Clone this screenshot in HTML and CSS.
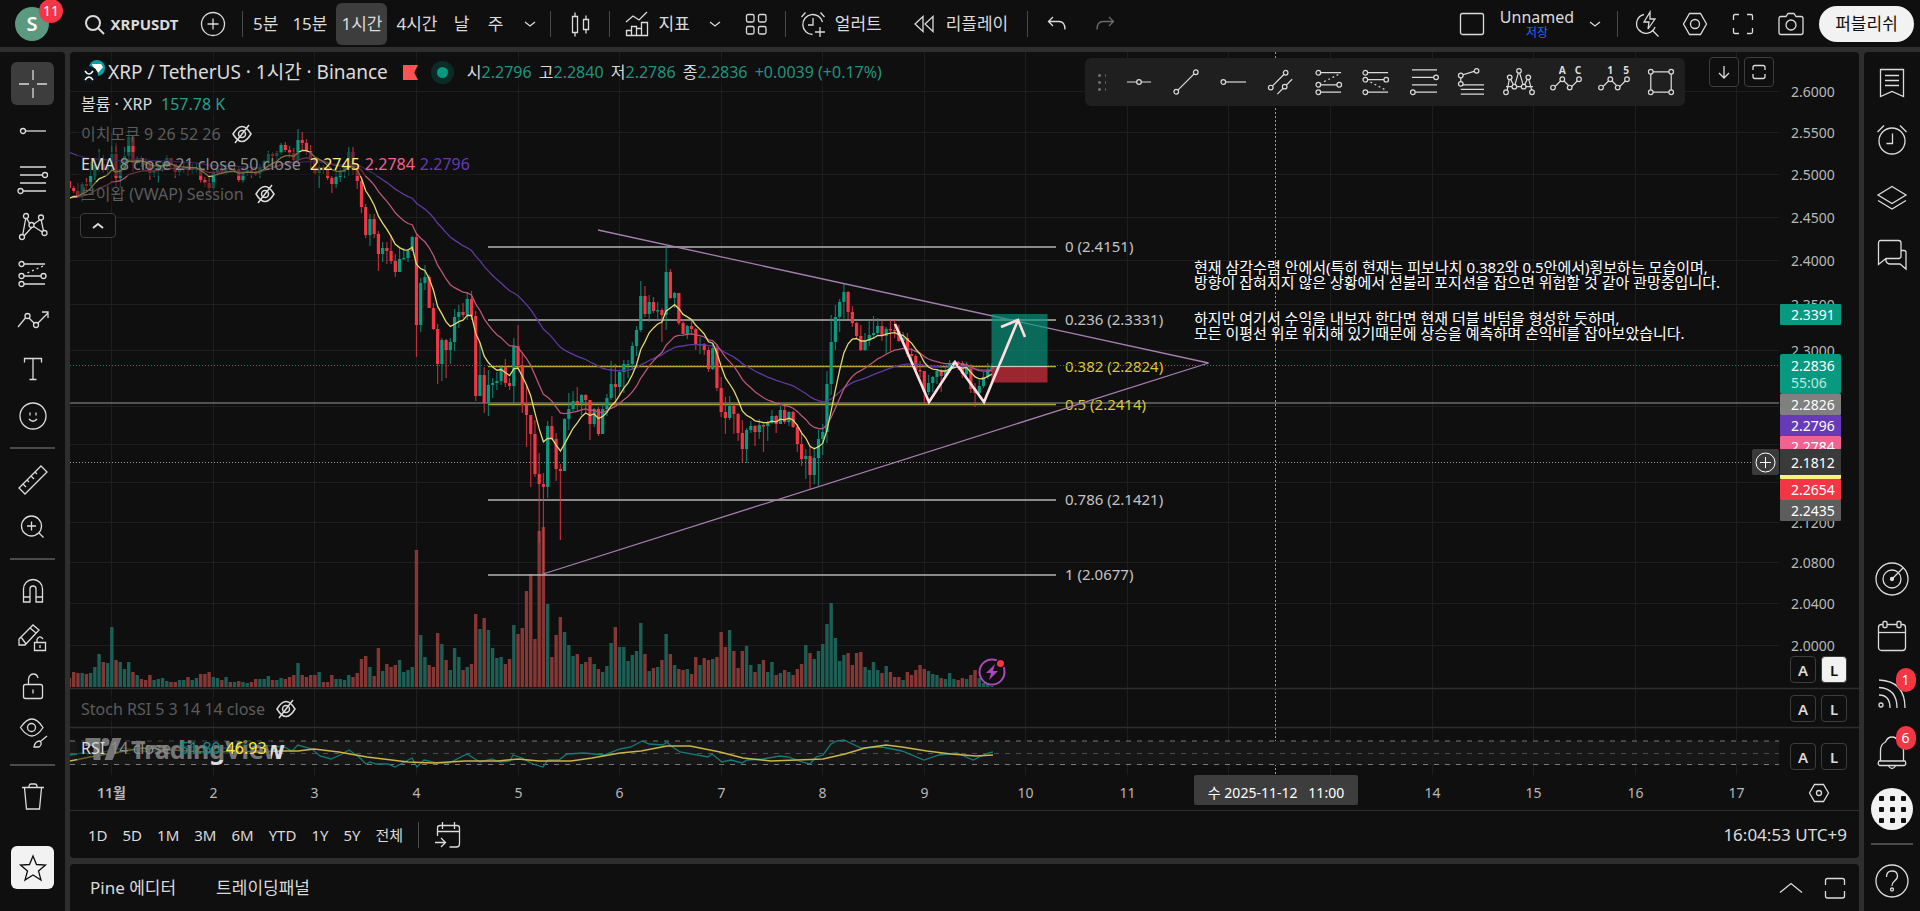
FILE: index.html
```html
<!DOCTYPE html>
<html lang="ko">
<head>
  <meta charset="UTF-8" />
  <meta name="viewport" content="width=device-width, initial-scale=1" />
  <title>XRPUSDT 2.2836</title>
  <link rel="stylesheet" href="styles.css">
</head>
<body>

<header class="topbar">
  <button class="avatar" aria-label="Account">S<span class="badge">11</span></button>
  <button class="tb symbol"><svg class="ic bold" viewBox="0 0 28 28"><circle cx="13" cy="13" r="7"/><path d="M18 18l6 6"/></svg>XRPUSDT</button>
  <button class="tb icon" aria-label="Compare"><svg class="ic" viewBox="0 0 28 28"><circle cx="14" cy="14" r="11.500"/><path d="M14 8.500v11M8.500 14h11"/></svg></button>
  <span class="sep"></span>
  <nav class="intervals">
    <button class="tb">5분</button>
    <button class="tb">15분</button>
    <button class="tb active">1시간</button>
    <button class="tb">4시간</button>
    <button class="tb">날</button>
    <button class="tb">주</button>
    <button class="tb" aria-label="More"><svg class="ic chev" viewBox="0 0 12 12"><path d="M1 4l5 4 5-4"/></svg></button>
  </nav>
  <span class="sep"></span>
  <button class="tb icon" aria-label="Candles"><svg class="ic" viewBox="0 0 28 28"><path d="M6.500 6.500h5v16h-5zM9 2.500v4M9 22.500v4M17.500 9.500h5v10h-5zM20 5.500v4M20 19.500v4"/></svg></button>
  <span class="sep"></span>
  <button class="tb study"><svg class="ic" viewBox="0 0 28 28"><path d="M3.500 20.500h5v5h-5zM8.500 16.500h5v9h-5zM13.500 18.500h5v7h-5zM18.500 12.500h6v13h-6zM3 12l7-6 6 4 8-8"/></svg>지표</button>
  <button class="tb narrow" aria-label="Favorites"><svg class="ic chev" viewBox="0 0 12 12"><path d="M1 4l5 4 5-4"/></svg></button>
  <button class="tb icon" aria-label="Templates"><svg class="ic" viewBox="0 0 28 28"><rect x="4.500" y="4.500" width="7.500" height="7.500" rx="1.500"/><rect x="16.500" y="4.500" width="7.500" height="7.500" rx="1.500"/><rect x="4.500" y="16.500" width="7.500" height="7.500" rx="1.500"/><rect x="16.500" y="16.500" width="7.500" height="7.500" rx="1.500"/></svg></button>
  <span class="sep"></span>
  <button class="tb study"><svg class="ic" viewBox="0 0 28 28"><path d="M23.500 12a10 10 0 1 0-10 12.500M14 8v7h-5M2.500 7l4-4.500M21.500 2.500l4 4.500M21 17v10M16 22h10"/></svg>얼러트</button>
  <button class="tb study wide"><svg class="ic" viewBox="0 0 28 28"><path d="M13 6.500v15L5 14zM23 6.500v15L15 14z"/></svg>리플레이</button>
  <span class="sep"></span>
  <button class="tb icon" aria-label="Undo"><svg class="ic" viewBox="0 0 28 28"><path d="M10 7l-4.500 4.500L10 16M6 11.500h10q6 0 6 8"/></svg></button>
  <button class="tb icon dim" aria-label="Redo"><svg class="ic" viewBox="0 0 28 28"><path d="M18 7l4.500 4.500L18 16M22 11.500H12q-6 0-6 8"/></svg></button>

  <div class="topright">
    <button class="tb icon" aria-label="Layout"><svg class="ic" viewBox="0 0 28 28"><rect x="2.500" y="3.500" width="23" height="21" rx="2"/></svg></button>
    <button class="tb layout"><span>Unnamed</span><small>저장</small></button>
    <button class="tb narrow" aria-label="Layouts"><svg class="ic chev" viewBox="0 0 12 12"><path d="M1 4l5 4 5-4"/></svg></button>
    <span class="sep"></span>
    <button class="tb icon" aria-label="Quick search"><svg class="ic" viewBox="0 0 28 28"><path d="M11 4.500A9.500 9.500 0 1 0 22 17M19 20l6.500 6.500M17 2l-6 10h5l-1 7 7-10h-5z"/></svg></button>
    <button class="tb icon" aria-label="Settings"><svg class="ic" viewBox="0 0 28 28"><path d="M8.500 3.500h11l6 10.500-6 10.500h-11L2.500 14z"/><circle cx="14" cy="14" r="4.500"/></svg></button>
    <button class="tb icon" aria-label="Fullscreen"><svg class="ic" viewBox="0 0 28 28"><path d="M4.500 10V6q0-1.500 1.500-1.500h4M18 4.500h4q1.500 0 1.500 1.500v4M23.500 18v4q0 1.500-1.500 1.500h-4M10 23.500H6q-1.500 0-1.500-1.500v-4"/></svg></button>
    <button class="tb icon" aria-label="Snapshot"><svg class="ic" viewBox="0 0 28 28"><path d="M4 6.500h5l2-3h6l2 3h5q2 0 2 2v14q0 2-2 2H4q-2 0-2-2v-14q0-2 2-2z"/><circle cx="14" cy="15" r="5"/></svg></button>
    <button class="publish">퍼블리쉬</button>
  </div>
</header>

<aside class="leftbar">
  <div class="tools eight">
    <button class="tool on" aria-label="Cross"><svg class="ic" viewBox="0 0 28 28"><path d="M14 0v10M14 18v10M0 14h10M18 14h10"/></svg></button>
    <button class="tool" aria-label="Line"><svg class="ic" viewBox="0 0 28 28"><circle cx="4" cy="14" r="2.500"/><path d="M6.500 14H27"/></svg></button>
    <button class="tool" aria-label="Fib"><svg class="ic" viewBox="0 0 28 28"><path d="M1 2h26M1 10h23M1 18h26M4 26h23"/><circle cx="26" cy="10" r="2.500"/><circle cx="1.500" cy="26" r="2.500"/></svg></button>
    <button class="tool" aria-label="Pattern"><svg class="ic" viewBox="0 0 28 28"><path d="M3.500 24L7 5l5 9 10-7 3 14-11-7-9 10"/><circle class="fill" cx="3" cy="25" r="2.500"/><circle class="fill" cx="7" cy="4" r="2.500"/><circle class="fill" cx="12.500" cy="13" r="2.500"/><circle class="fill" cx="22" cy="5.500" r="2.500"/><circle class="fill" cx="25.500" cy="21" r="2.500"/></svg></button>
    <button class="tool" aria-label="Projection"><svg class="ic" viewBox="0 0 28 28"><path d="M4.500 4H26M4.500 16H22M4.500 24H26"/><path class="dots" d="M24 6L6 14"/><circle class="fill" cx="2.500" cy="4" r="2.500"/><circle class="fill" cx="2.500" cy="16" r="2.500"/><circle class="fill" cx="24.500" cy="16" r="2.500"/><circle class="fill" cx="2.500" cy="24" r="2.500"/></svg></button>
    <button class="tool" aria-label="Brush"><svg class="ic" viewBox="0 0 28 28"><path d="M-1 20L8 9l9 9L29 6M23 5h6v6"/><circle class="fill" cx="8.500" cy="9" r="2.500"/><circle class="fill" cx="17" cy="18" r="2.500"/></svg></button>
    <button class="tool" aria-label="Text"><svg class="ic" viewBox="0 0 28 28"><path d="M5.500 7.500v-4h17v4M14 3.500v21M10.500 24.500h7"/></svg></button>
    <button class="tool" aria-label="Emoji"><svg class="ic" viewBox="0 0 28 28"><circle cx="14" cy="14" r="13"/><path d="M10 17q4 4.500 8 0M11 10.500v3M17 10.500v3"/></svg></button>
  </div>
  <hr>
  <div class="tools two">
    <button class="tool" aria-label="Measure"><svg class="ic" viewBox="0 0 28 28"><path d="M22 0l6 6L6 28l-6-6zM4 18l3 3M8 14l2 2M12 10l3 3M16 6l2 2"/></svg></button>
    <button class="tool" aria-label="Zoom"><svg class="ic" viewBox="0 0 28 28"><circle cx="12.500" cy="13" r="10"/><path d="M12.500 8.500v9M8 13h9M20 20l4.500 4.500"/></svg></button>
  </div>
  <hr>
  <div class="tools four">
    <button class="tool" aria-label="Magnet"><svg class="ic" viewBox="0 0 28 28"><path d="M4.500 25V12a9.500 9.500 0 0 1 19 0v13H17V12a3 3 0 0 0-6 0v13zM4.500 20H11M17 20h6.500"/></svg></button>
    <button class="tool" aria-label="Lock drawing"><svg class="ic" viewBox="0 0 28 28"><path d="M0 21v-6L14 1l6 5L6 21zM2 13l5 7M11 4l6 5M15.500 18.500h11v8h-11zM18 18.500v-3q2.500-5 6-.5M21 21v3"/></svg></button>
    <button class="tool" aria-label="Lock all"><svg class="ic" viewBox="0 0 28 28"><rect x="4.500" y="12.500" width="19" height="14" rx="2"/><path d="M9.500 12V7q1-5 5-5 3.500 0 4.500 4M14 17.500v4"/></svg></button>
    <button class="tool" aria-label="Hide"><svg class="ic" viewBox="0 0 28 28"><path d="M1.500 8.500q11.500-17 22.500 0-11 17-22.500 0z"/><circle cx="12.500" cy="8.500" r="4"/><path d="M15 28q1-6 6-6 3 3-1 6zM22 22l6-5"/></svg></button>
  </div>
  <hr>
  <div class="tools one">
    <button class="tool" aria-label="Remove"><svg class="ic" viewBox="0 0 28 28"><path d="M3 4.500h22M5.500 5l2 21h13l2-21M10 4q0-3 2-3h4q2 0 2 3"/></svg></button>
  </div>
  <button class="tool star" aria-label="Favorites toolbar"><svg class="ic" viewBox="0 0 28 28"><path d="M14 2l3.500 8.500 9 .5-7 6 2.500 9-8-5-8 5 2.500-9-7-6 9-.5z"/></svg></button>
</aside>

<main class="center">
  <section class="panel chartpanel">
    <div class="chart">
      <svg id="chart" class="plot" viewBox="70 52 1789 758"></svg>

      <div class="legend">
        <div class="row title">
          <svg class="coin" viewBox="0 0 24 24"><circle cx="16" cy="8" r="8" fill="#00a3a3"/><path d="M11 4h9l2 3-5 6-5-6z" fill="#fff"/><circle cx="8" cy="15" r="9" fill="#0f1418"/><path d="M4 11q4 6 8 0M4 20q4-6 8 0" fill="none" stroke="#fff" stroke-width="1.500"/></svg>
          <h1>XRP / TetherUS · 1시간 · Binance</h1>
          <svg class="flag" viewBox="0 0 16 16"><path d="M0 0h16l-4 8 4 8H0z" fill="#ff5252"/></svg>
          <span class="live"></span>
          <p class="ohlc">시<b>2.2796</b> 고<b>2.2840</b> 저<b>2.2786</b> 종<b>2.2836</b> <b class="chg">+0.0039 (+0.17%)</b></p>
        </div>
        <div class="row">볼륨 · XRP <span class="vol">157.78 K</span></div>
        <div class="row off">이치모쿠 9 26 52 26 <svg class="eye" viewBox="0 0 20 20"><path d="M1 10q9-15 18 0-9 15-18 0zM3 19L17 1"/><circle cx="10" cy="10" r="3.500"/></svg></div>
        <div class="row">EMA <span class="args">8 close 21 close 50 close</span> <span class="e8">2.2745</span> <span class="e21">2.2784</span> <span class="e50">2.2796</span></div>
        <div class="row off">브이왑 (VWAP) Session <svg class="eye" viewBox="0 0 20 20"><path d="M1 10q9-15 18 0-9 15-18 0zM3 19L17 1"/><circle cx="10" cy="10" r="3.500"/></svg></div>
        <button class="collapse" aria-label="Collapse"><svg class="ic chev bold" viewBox="0 0 12 12"><path d="M1 8l5-4 5 4"/></svg></button>
      </div>
      <div class="row off sub stoch">Stoch RSI 5 3 14 14 close <svg class="eye" viewBox="0 0 20 20"><path d="M1 10q9-15 18 0-9 15-18 0zM3 19L17 1"/><circle cx="10" cy="10" r="3.500"/></svg></div>
      <div class="logo"><svg viewBox="0 0 36 22"><path d="M0 0h15v22H8V8H0z"/><circle cx="20" cy="4" r="4"/><path d="M27 0h9l-9 22h-8z"/></svg>TradingView</div>
      <div class="row sub rsi">RSI <span class="args">14 close</span> <span class="r1">51.80</span> <span class="r2">46.93</span></div>

      <div class="drawbar">
        <span class="grip"></span>
        <button class="draw" aria-label="Horizontal line"><svg class="ic" viewBox="0 0 28 28"><path d="M1 14h10.500M16.500 14H27"/><circle cx="14" cy="14" r="2.500"/></svg></button>
        <button class="draw" aria-label="Trend line"><svg class="ic" viewBox="0 0 28 28"><path d="M5 23L23 5"/><circle class="fill" cx="3.500" cy="24.500" r="2.500"/><circle class="fill" cx="24.500" cy="3.500" r="2.500"/></svg></button>
        <button class="draw" aria-label="Horizontal ray"><svg class="ic" viewBox="0 0 28 28"><path d="M5 14h22"/><circle cx="2.500" cy="14" r="2.500"/></svg></button>
        <button class="draw" aria-label="Parallel channel"><svg class="ic" viewBox="0 0 28 28"><path d="M3 20L19 4M10 27l16-16"/><circle class="fill" cx="3" cy="20" r="2.500"/><circle class="fill" cx="19" cy="4" r="2.500"/><circle class="fill" cx="18" cy="19" r="2.500"/></svg></button>
        <button class="draw" aria-label="Long position"><svg class="ic" viewBox="0 0 28 28"><path d="M4 4h23M4 17h20M4 25h23"/><path class="dots" d="M24 6L6 15"/><circle class="fill" cx="2.500" cy="4" r="2.500"/><circle class="fill" cx="2.500" cy="17" r="2.500"/><circle class="fill" cx="25" cy="17" r="2.500"/><circle class="fill" cx="2.500" cy="25" r="2.500"/></svg></button>
        <button class="draw" aria-label="Short position"><svg class="ic" viewBox="0 0 28 28"><path d="M4 4h23M4 11.500h20M4 25h23"/><path class="dots" d="M8 14l17 9"/><circle class="fill" cx="2.500" cy="4" r="2.500"/><circle class="fill" cx="2.500" cy="11.500" r="2.500"/><circle class="fill" cx="25" cy="11.500" r="2.500"/><circle class="fill" cx="2.500" cy="25" r="2.500"/></svg></button>
        <button class="draw" aria-label="Fib retracement"><svg class="ic" viewBox="0 0 28 28"><path d="M1 1h27M1 9h26M1 17h27M3 25h25"/><circle class="fill" cx="27" cy="9" r="2.500"/><circle class="fill" cx="2" cy="25" r="2.500"/></svg></button>
        <button class="draw" aria-label="Fib extension"><svg class="ic" viewBox="0 0 28 28"><path d="M3 15V7l16-5M3 17h25M3 22h25M3 27h25"/><circle class="fill" cx="3" cy="7" r="2.500"/><circle class="fill" cx="20" cy="2" r="2.500"/><circle class="fill" cx="3" cy="16" r="2.500"/></svg></button>
        <button class="draw" aria-label="Head and shoulders"><svg class="ic" viewBox="0 0 28 28"><path d="M0 19h29M1 24L4 9l5 10 5-17 5 17 5-10 4 15"/><circle class="fill" cx="0" cy="25" r="2.500"/><circle class="fill" cx="4" cy="9" r="2.500"/><circle class="fill" cx="9" cy="19" r="2.500"/><circle class="fill" cx="14" cy="2" r="2.500"/><circle class="fill" cx="19" cy="19" r="2.500"/><circle class="fill" cx="24" cy="9" r="2.500"/><circle class="fill" cx="28" cy="25" r="2.500"/></svg></button>
        <button class="draw" aria-label="ABC wave"><svg class="ic" viewBox="0 0 28 28"><path d="M1 20l9-9 9 9 9-9"/><circle class="fill" cx="0" cy="20" r="2.500"/><circle class="fill" cx="10" cy="11" r="2.500"/><circle class="fill" cx="18" cy="20" r="2.500"/><circle class="fill" cx="28" cy="11" r="2.500"/><text x="10" y="5">A</text><text x="27" y="5">C</text></svg></button>
        <button class="draw" aria-label="12345 wave"><svg class="ic" viewBox="0 0 28 28"><path d="M1 20l9-9 9 9 9-9"/><circle class="fill" cx="0" cy="20" r="2.500"/><circle class="fill" cx="10" cy="11" r="2.500"/><circle class="fill" cx="18" cy="20" r="2.500"/><circle class="fill" cx="28" cy="11" r="2.500"/><text x="10" y="5">1</text><text x="27" y="5">5</text></svg></button>
        <button class="draw" aria-label="Rectangle"><svg class="ic" viewBox="0 0 28 28"><path d="M3 3h22v22H3z"/><circle class="fill" cx="3" cy="3" r="2.500"/><circle class="fill" cx="25" cy="3" r="2.500"/><circle class="fill" cx="3" cy="25" r="2.500"/><circle class="fill" cx="25" cy="25" r="2.500"/></svg></button>
      </div>
      <div class="panebtns">
        <button class="box" aria-label="Move down"><svg class="ic small" viewBox="0 0 16 16"><path d="M8 2v12M3 9l5 5 5-5"/></svg></button>
        <button class="box" aria-label="Maximize"><svg class="ic small" viewBox="0 0 16 16"><path d="M2 6V3.500Q2 1.500 4 1.500h8q2 0 2 2V6M2 10v2.500q0 2 2 2h8q2 0 2-2V10"/></svg></button>
      </div>
      <div class="scale s1"><button class="al">A</button><button class="al on">L</button></div>
      <div class="scale s2"><button class="al">A</button><button class="al">L</button></div>
      <div class="scale s3"><button class="al">A</button><button class="al">L</button></div>
    </div>
    <div class="ranges">
      <button>1D</button><button>5D</button><button>1M</button><button>3M</button><button>6M</button><button>YTD</button><button>1Y</button><button>5Y</button><button>전체</button>
      <span class="sep"></span>
      <button aria-label="Go to"><svg class="ic" viewBox="0 0 28 28"><path d="M3.500 15V7q0-2.500 2.500-2.500h17q2.500 0 2.500 2.500v16q0 3-3 3h-7M3.500 10.500h22M8.500 1v7M20.500 1v7M1 21.500h10M7 17l4.500 4.500L7 26"/></svg></button>
      <span class="clock">16:04:53 UTC+9</span>
    </div>
  </section>

  <section class="panel bottom">
    <button>Pine 에디터</button>
    <button>트레이딩패널</button>
    <span class="grow"></span>
    <button aria-label="Open panel"><svg class="ic" viewBox="0 0 28 28"><path d="M3 18.500l11-9 11 9"/></svg></button>
    <button aria-label="Maximize panel"><svg class="ic" viewBox="0 0 28 28"><path d="M4.500 11V6.500q0-2 2-2h15q2 0 2 2V11M4.500 17v5q0 2 2 2h15q2 0 2-2v-5"/></svg></button>
  </section>
</main>

<aside class="rightbar">
  <div class="widgets w4">
    <button class="tool" aria-label="Watchlist"><svg class="ic big" viewBox="0 0 32 32"><path d="M4.500 2.500h23v27L16 24.500l-11.500 5zM9 8.500h14M9 13.500h14M9 18.500h14"/></svg></button>
    <button class="tool" aria-label="Alerts"><svg class="ic big" viewBox="0 0 32 32"><circle cx="16" cy="17" r="13"/><path d="M16.500 9.500v10h-6M1.500 8L8 1.500M24 1.500L30.500 8"/></svg></button>
    <button class="tool" aria-label="Object tree"><svg class="ic big" viewBox="0 0 32 32"><path d="M16 4.500l14 8.500-14 8.500L2 13zM2 18.500L16 27l14-8.500"/></svg></button>
    <button class="tool" aria-label="Chats"><svg class="ic big" viewBox="0 0 32 32"><path d="M4.500 1.500h18q2.500 0 2.500 2.500v13q0 2.500-2.500 2.500H10l-7.500 6v-21q0-3 2-3zM25 11.500h3q2 0 2 2v16.500l-6-5H14q-3 0-4-3v-2"/></svg></button>
  </div>
  <div class="widgets w5">
    <button class="tool" aria-label="Screener"><svg class="ic big" viewBox="0 0 32 32"><circle cx="16" cy="16" r="16"/><circle cx="16" cy="16" r="9"/><circle cx="16" cy="16" r="1.500" fill="#dbdbdb"/><path d="M16 16L27 5"/></svg></button>
    <button class="tool" aria-label="Calendar"><svg class="ic big" viewBox="0 0 32 32"><rect x="2.500" y="4.500" width="27" height="26" rx="3"/><path d="M2.500 12.500h27"/><rect class="fill" x="7" y="1.500" width="4" height="6" rx="1"/><rect class="fill" x="21" y="1.500" width="4" height="6" rx="1"/></svg></button>
    <button class="tool" aria-label="Ideas"><svg class="ic big" viewBox="0 0 32 32"><circle cx="5" cy="27" r="2"/><path d="M3 17q11 0 11 13M3 9.500q18 1 18 20.500M3 2q26 1 26 28"/></svg><span class="badge">1</span></button>
    <button class="tool" aria-label="Notifications"><svg class="ic big" viewBox="0 0 32 32"><path d="M4.500 25V15q0-7 5-9 2-5 6.500-5t6.500 5q5 2 5 9v10zM3 25h26q2 4-1 4.500H4q-3-.5-1-4.500zM12.500 30q3.500 5 7 0"/></svg><span class="badge">6</span></button>
    <button class="apps" aria-label="Products"><i></i><i></i><i></i><i></i><i></i><i></i><i></i><i></i><i></i></button>
  </div>
  <hr>
  <button class="tool" aria-label="Help"><svg class="ic big" viewBox="0 0 32 32"><circle cx="16" cy="16" r="16"/><path d="M10.500 12q0-6 5.500-6t5.500 5q0 3-3 5-2.500 2-2.500 5"/><circle cx="16" cy="24.500" r="1.500"/></svg></button>
</aside>

<script src="chart.js"></script>
</body>
</html>
```

FILE: styles.css
```css
* { box-sizing: border-box; }
body {
  margin: 0;
  min-height: 100vh;
  display: grid;
  grid-template: 47px 1fr / 65px 1fr 56px;
  gap: 5px;
  background: #2e2e2e;
  color: #dbdbdb;
  font-family: "Noto Sans", "Noto Sans CJK KR", sans-serif;
  font-size: 17px;
  line-height: 20px;
  overflow-x: hidden;
}
button { background: none; border: 0; padding: 0; margin: 0; color: inherit; font: inherit; cursor: pointer; white-space: nowrap; }
hr { width: 45px; height: 2px; margin: 7px 0; border: 0; background: #4a4a4a; }
h1, p { margin: 0; font-weight: 400; }

/* icons */
.ic { width: 28px; height: 28px; flex: none; fill: none; stroke: #dbdbdb; stroke-width: 1.3; overflow: visible; }
.ic.chev { width: 12px; height: 12px; }
.ic.small { width: 16px; height: 16px; }
.ic.big { width: 32px; height: 32px; }
.ic.bold { stroke-width: 2; }
.ic .dots { stroke-dasharray: 2 3; }
.ic .fill { fill: #0f0f0f; }
.ic text { fill: #dbdbdb; stroke: none; font-size: 11px; font-weight: 700; text-anchor: middle; }
.badge {
  position: absolute; top: 0; right: 0;
  min-width: 20px; height: 24px; padding: 0 4px;
  border-radius: 12px; background: #f23645; color: #fff;
  font-size: 14px; font-weight: 400; line-height: 24px; text-align: center;
}

/* top bar */
.topbar { grid-column: 1 / -1; display: flex; align-items: center; background: #0f0f0f; padding-right: 6px; }
.avatar { position: relative; width: 34px; height: 34px; margin-left: 15px; border-radius: 50%; background: #5b9a80; color: #fff; font-size: 20px; font-weight: 600; }
.avatar .badge { top: -8px; right: -14px; min-width: 24px; }
.tb { display: flex; align-items: center; justify-content: center; gap: 8px; height: 42px; border-radius: 6px; }
.tb.icon { width: 38px; margin: 0 5px; }
.tb.narrow { width: 30px; margin: 0 2px; }
.tb.study { padding: 0 8px; }
.tb.wide { margin-left: 12px; padding-right: 14px; }
.tb.active { background: #3d3d3d; }
.tb.dim { opacity: .45; }
.tb.symbol { margin: 0 4px 0 24px; width: 112px; gap: 3px; font-size: 15px; font-weight: 700; }
.sep { width: 1px; height: 26px; background: #4a4a4a; margin: 0 5px; }
.intervals { display: flex; gap: 4px; }
.intervals .tb { min-width: 30px; padding: 0 5px; }
.topright { margin-left: auto; display: flex; align-items: center; }
.tb.layout { flex-direction: column; gap: 0; width: 82px; font-size: 16px; line-height: 18px; }
.layout small { color: #2962ff; font-size: 12px; line-height: 14px; }
.publish { width: 95px; height: 36px; margin-left: 4px; border-radius: 18px; background: #f2f2f2; color: #0f0f0f; }

/* side bars */
.leftbar, .rightbar { display: flex; flex-direction: column; align-items: center; background: #0f0f0f; }
.leftbar { padding-top: 8px; border-radius: 0 4px 0 0; }
.rightbar { padding: 2px 0 9px; border-radius: 4px 0 0 0; }
.tools, .widgets { display: grid; grid-auto-rows: 1fr; align-items: center; justify-items: center; }
.eight { height: 380px; }
.four { height: 190px; }
.two { height: 95px; }
.one { height: 48px; }
.w4 { height: 230px; }
.w5 { height: 288px; margin-top: auto; }
.tool { position: relative; display: flex; align-items: center; justify-content: center; width: 43px; height: 43px; border-radius: 6px; }
.tool.on { background: #3d3d3d; }
.star { margin-top: 25px; background: #f2f2f2; }
.star .ic { stroke: #0f0f0f; }
.rightbar .badge { top: -4px; right: -2px; }
.rightbar hr { width: 42px; margin: 5px 0 14px; }
.apps { display: grid; grid-template-columns: repeat(3, 5px); gap: 6px; place-content: center; width: 42px; height: 42px; border-radius: 50%; background: #f2f2f2; }
.apps i { height: 5px; border-radius: 1px; background: #0f0f0f; }

/* panels */
.center { display: flex; flex-direction: column; gap: 6px; min-width: 0; }
.panel { background: #0f0f0f; border-radius: 4px; }
.bottom { flex: 1; display: flex; align-items: center; gap: 16px; padding: 0 10px 0 20px; border-radius: 4px 4px 0 0; }
.bottom button:nth-child(2) { margin-left: 24px; }
.bottom .ic { display: block; }
.grow { flex: 1; }
.ranges { display: flex; align-items: center; gap: 15px; height: 48px; padding: 0 12px 0 18px; border-top: 1px solid #2e2e2e; font-size: 15px; }
.ranges .sep { margin: 0; }
.ranges .ic { display: block; }
.clock { margin-left: auto; font-size: 17px; }

/* chart */
.chart { position: relative; }
.plot { display: block; width: 100%; height: auto; font-size: 14px; }
.up { fill: #089981; }
.down { fill: #f23645; }
.note, .fib { font-size: 15px; }

.legend { position: absolute; left: 7px; top: 6px; display: flex; flex-direction: column; align-items: flex-start; gap: 6px; }
.row { display: flex; align-items: center; gap: 5px; height: 24px; padding: 0 4px; font-size: 16px; background: rgba(15, 15, 15, .5); white-space: nowrap; }
.row.title { height: 28px; gap: 3px; }
.title h1 { font-size: 19px; line-height: 28px; }
.row.off { color: #5c5c5c; }
.coin { width: 24px; height: 24px; }
.flag { width: 15px; height: 15px; margin-left: 12px; }
.live { width: 11px; height: 11px; margin: 0 16px; border-radius: 50%; background: #089981; box-shadow: 0 0 0 6px #0c2b26; }
.ohlc b { color: #22937f; font-weight: 400; margin-right: 3px; }
.vol { color: #2a9d8f; margin-left: 4px; }
.args { color: #8c8c8c; }
.e8 { color: #fff176; margin-left: 4px; }
.e21 { color: #f06292; }
.e50 { color: #673ab7; }
.eye { width: 20px; height: 20px; margin-left: 6px; fill: none; stroke: #dbdbdb; stroke-width: 1.5; }
.collapse { display: flex; align-items: center; justify-content: center; width: 36px; height: 25px; margin: 1px 0 0 3px; border: 1px solid #3d3d3d; border-radius: 4px; background: #0f0f0f; }
.sub { position: absolute; left: 7px; }
.stoch { top: 645px; }
.rsi { top: 684px; }
.r1 { color: #0f8b8d; margin-left: 4px; }
.r2 { color: #ffeb3b; }
.logo { position: absolute; left: 15px; top: 684px; display: flex; align-items: center; gap: 9px; height: 26px; color: #dbdbdb; font-size: 25px; font-weight: 700; }
.logo svg { width: 37px; height: 22px; fill: #dbdbdb; }

.drawbar { position: absolute; left: 1015px; top: 6px; display: flex; align-items: center; width: 600px; height: 48px; padding-left: 11px; border-radius: 6px; background: #1f1f1f; }
.drawbar .fill { fill: #1f1f1f; }
.grip { width: 10px; height: 20px; margin-right: 9px; background: radial-gradient(circle, #6b6b6b 1px, transparent 2px) 0 0 / 7px 7px; }
.draw { display: flex; flex: 1; align-items: center; justify-content: center; height: 48px; }
.draw .ic { width: 26px; height: 26px; }
.panebtns { position: absolute; right: 85px; top: 5px; display: flex; gap: 5px; }
.box { display: flex; align-items: center; justify-content: center; width: 30px; height: 30px; border: 1px solid #3d3d3d; border-radius: 4px; background: #0f0f0f; }
.scale { position: absolute; right: 12px; display: flex; gap: 5px; }
.s1 { top: 604px; }
.s2 { top: 643px; }
.s3 { top: 691px; }
.al { width: 26px; height: 27px; border: 1px solid #3d3d3d; border-radius: 4px; font-size: 15px; font-weight: 600; }
.al.on { background: #f2f2f2; color: #0f0f0f; }
```

FILE: chart.js
```js
const svg = document.getElementById("chart");
const out = [];

const DAY = 101.56;        // px per day
const STEP = DAY / 24;     // px per candle
const X0 = 111.8;          // first candle of November
const BASE = 687;          // volume baseline
const LEFT = 70, RIGHT = 1779;
const xAt = i => X0 + i * STEP;

// high, low, close of each hour, as y on the log scale; open is the previous close
const FIRST = -10;
const candles = [
  181,188,188, 186,193,191, 183,198,196, 182,202,184, 178,190,186, 162,190,176, 158,180,165, 149,172,164, 155,173,170, 160,175,167,
  133,170,154, 143,187,178, 162,188,169, 147,170,156, 129,162,137, 136,172,163, 156,165,158, 156,167,162, 158,170,165, 162,180,173,
  167,177,170, 163,183,167, 162,172,165, 155,168,158, 158,168,164, 164,178,172, 166,176,170, 163,173,167, 163,176,170, 164,174,168,
  162,173,168, 166,183,180, 177,187,183, 178,194,188, 170,190,172, 166,176,169, 166,173,171, 164,175,168, 166,172,170, 166,173,169,
  166,182,180, 168,183,172, 168,176,170, 166,178,173, 167,176,174, 164,178,167, 160,170,161, 151,165,154, 152,163,156, 151,160,153,
  143,155,145, 142,152,150, 146,158,153, 148,163,160, 129,163,140, 132,150,143, 139,155,151, 145,168,160, 157,175,173, 164,188,167,
  165,174,170, 168,180,178, 176,193,184, 170,188,177, 168,182,172, 163,178,168, 147,176,152, 147,175,168, 168,189,181, 178,213,207,
  204,238,235, 214,246,219, 214,238,234, 231,271,254, 242,262,248, 242,264,251, 235,264,261, 254,277,272, 248,272,259, 248,259,258,
  249,262,251, 236,251,237, 233,357,325, 278,332,283, 265,290,277, 275,308,308, 303,330,329, 324,384,364, 338,381,340, 339,378,350,
  338,364,342, 309,351,317, 305,328,312, 303,318,315, 292,320,299, 291,320,316, 311,401,396, 342,396,375, 367,413,403, 370,416,385,
  378,398,383, 372,390,381, 365,385,367, 359,387,383, 378,390,386, 338,404,346, 325,370,365, 352,413,405, 386,447,415, 415,487,434,
  420,477,474, 453,543,484, 473,574,487, 421,498,426, 416,440,439, 433,481,469, 464,540,471, 418,471,419, 393,430,409, 391,411,401,
  387,412,404, 394,415,395, 394,412,400, 400,440,424, 408,427,409, 407,436,434, 403,434,409, 394,416,398, 361,400,384, 364,405,387,
  371,396,372, 360,393,364, 360,378,364, 342,370,346, 326,356,330, 281,332,296, 286,317,314, 295,322,302, 297,313,311, 302,320,310,
  308,342,315, 247,330,272, 269,299,298, 292,308,293, 293,325,323, 319,334,334, 325,339,326, 321,335,329, 328,350,345, 337,354,344,
  343,355,350, 347,372,369, 343,370,348, 344,391,388, 377,417,412, 397,434,418, 396,420,406, 403,434,414, 413,441,433, 420,463,449,
  428,463,430, 421,433,426, 425,446,432, 419,439,425, 422,452,426, 421,441,423, 410,424,416, 415,433,424, 406,424,410, 405,424,422,
  411,426,412, 411,428,427, 424,452,444, 434,466,459, 449,479,456, 447,489,475, 447,484,458, 430,486,439, 424,455,432, 371,443,384,
  315,395,342, 305,350,317, 299,332,302, 284,320,292, 291,319,312, 306,327,323, 322,338,336, 325,351,350, 333,351,341, 320,346,335,
  316,338,333, 318,334,326, 320,341,336, 327,354,329, 320,351,330, 320,338,331, 325,342,341, 332,344,338, 333,357,354, 348,360,356,
  354,372,370, 361,378,371, 371,404,392, 375,395,383, 376,392,377, 369,384,371, 369,392,376, 367,377,371, 360,373,363, 361,369,362,
  361,370,363, 361,378,374, 362,376,365, 364,393,389, 383,407,393, 380,397,386, 372,388,377, 363,379,369, 363,372,366
];

const volumes = [
  9,15,14,14,13,14,20,33,25,24, 60,27,25,18,25,15,12,8,7,12, 7,8,9,6,5,5,7,7,10,7, 9,13,13,15,10,9,7,10,5,5,
  6,5,4,5,8,8,8,11,7,7, 9,8,10,12,24,12,10,12,12,15, 5,5,12,8,8,7,12,10,14,28, 31,20,11,39,16,23,20,22,27,15,
  17,20,137,52,30,22,20,54,43,27, 17,39,30,17,20,23,73,58,69,57, 39,29,30,23,28,62,53,59,96,113, 48,156,160,83,30,52,70,55,42,31,
  33,23,25,30,23,18,15,21,44,60, 40,40,26,32,36,64,33,16,19,20, 27,53,33,22,18,17,18,13,30,22, 29,27,28,30,55,40,57,36,19,36,
  41,22,15,23,27,15,25,12,14,17, 15,12,18,23,42,34,28,36,43,63, 84,49,26,32,34,22,34,35,20,17, 25,17,14,21,15,10,10,7,15,12,
  17,22,18,16,13,12,9,8,14,8, 7,9,8,12,17,9,4,3,1
];

const prices = [
  ["2.6000", 91], ["2.5500", 132], ["2.5000", 174], ["2.4500", 217], ["2.4000", 260], ["2.3500", 304], ["2.3000", 350],
  ["", 406], ["", 444], ["", 482], ["2.1200", 522], ["2.0800", 562], ["2.0400", 603], ["2.0000", 645]
];

function line(x1, y1, x2, y2, stroke, width = 1, extra = "") {
  out.push(`<line x1="${x1}" y1="${y1}" x2="${x2}" y2="${y2}" stroke="${stroke}" stroke-width="${width}" ${extra}/>`);
}
function rect(x, y, w, h, fill, extra = "") {
  out.push(`<rect x="${x}" y="${y}" width="${w}" height="${h}" fill="${fill}" ${extra}/>`);
}
function text(x, y, str, fill, extra = "") {
  out.push(`<text x="${x}" y="${y}" fill="${fill}" xml:space="preserve" ${extra}>${str}</text>`);
}
function poly(points, stroke, width = 1.3, extra = "") {
  out.push(`<polyline points="${points}" fill="none" stroke="${stroke}" stroke-width="${width}" ${extra}/>`);
}

// grid and axis texts
prices.forEach(([label, y]) => {
  line(LEFT, y + 0.5, RIGHT, y + 0.5, "#1e1e1e");
  if (label) text(1791, y + 6, label, "#b8b8b8");
});
const days = ["11월", 2, 3, 4, 5, 6, 7, 8, 9, 10, 11, "", "", 14, 15, 16, 17];
days.forEach((d, k) => {
  const x = Math.floor(X0 + k * DAY) + 0.5;
  line(x, 52, x, 775, "#1e1e1e");
  if (d) text(x, 798, d, "#b8b8b8", k ? 'text-anchor="middle"' : 'text-anchor="middle" font-weight="600"');
});

// volume and candles
const closes = [];
let bars = "", bodies = "";
for (let n = 0; n < candles.length / 3; n++) {
  const [h, l, c] = candles.slice(n * 3, n * 3 + 3);
  const o = n ? closes[n - 1] : 181;
  const x = xAt(FIRST + n);
  const up = c <= o;
  const v = volumes[n] || 1;
  closes.push(c);
  bars += `<rect x="${x - 1.7}" y="${BASE - v}" width="3.4" height="${v}" fill="${up ? "#1d5e55" : "#853735"}"/>`;
  const cls = up ? "up" : "down";
  bodies += `<rect class="${cls}" x="${x - 0.6}" y="${Math.min(h, o, c)}" width="1.2" height="${Math.max(l, o, c) - Math.min(h, o, c)}" opacity=".75"/>`;
  bodies += `<rect class="${cls}" x="${x - 1.6}" y="${Math.min(o, c)}" width="3.2" height="${Math.max(1.5, Math.abs(c - o))}"/>`;
}
out.push(bars);

// fib levels
const fibs = [["0 (2.4151)", 247, 0], ["0.236 (2.3331)", 320, 0], ["0.382 (2.2824)", 366.5, 1], ["0.5 (2.2414)", 404.5, 1], ["0.786 (2.1421)", 500, 0], ["1 (2.0677)", 575, 0]];
fibs.forEach(([label, y, hot]) => line(488, y, 1056, y, hot ? "#b5a82f" : "#b4b4b4", hot ? 1.6 : 1.4));
line(LEFT, 403, RIGHT, 403, "#6a6a6a", 1.3);

out.push(bodies);

function ema(period, start) {
  const k = 2 / (period + 1);
  let e = start;
  return closes.map((c, n) => {
    e += (c - e) * k;
    return xAt(FIRST + n).toFixed(1) + "," + e.toFixed(1);
  }).join(" ");
}
poly(ema(50, 151), "#5e3a9e");
poly(ema(21, 199), "#b9567c");
poly(ema(8, 201), "#e3d873");

fibs.forEach(([label, y, hot]) => text(1065, y + 5, label, hot ? "#d6c83a" : "#c4c4c4", 'class="fib"'));

// triangle
line(598, 230, 1208.5, 363, "#a67fb0", 1.3);
line(543, 574, 1208.5, 363, "#a67fb0", 1.3);

// long position
rect(991.5, 314, 56, 52, "#089981", 'opacity=".65"');
rect(991.5, 366, 56, 16.5, "#f23645", 'opacity=".62"');
line(991.5, 366.5, 1047.5, 366.5, "#c9c9c9", 1);
poly("895,324 929,402 955,362 984,402 1018,320", "#ffdfe1", 2.6);
poly("1001,327 1018,320 1025,337", "#ffdfe1", 2.6);

// dotted price line and crosshair
line(LEFT, 365.5, RIGHT, 365.5, "#1f7f70", 1, 'stroke-dasharray="1 2"');
line(LEFT, 462.5, 1752, 462.5, "#9a9a9a", 1, 'stroke-dasharray="1 2"');
line(1275.5, 52, 1275.5, 775, "#9a9a9a", 1, 'stroke-dasharray="2 2"');

// note
[
  [273, "현재 삼각수렴 안에서(특히 현재는 피보나치 0.382와 0.5안에서)횡보하는 모습이며,"],
  [288, "방향이 잡혀지지 않은 상황에서 섣불리 포지션을 잡으면 위험할 것 같아 관망중입니다."],
  [324, "하지만 여기서 수익을 내보자 한다면 현재 더블 바텀을 형성한 듯하며,"],
  [339, "모든 이평선 위로 위치해 있기때문에 상승을 예측하며 손익비를 잡아보았습니다."]
].forEach(([y, s]) => text(1194, y, s, "#ffffff", 'class="note"'));

// lightning marker
out.push('<circle cx="992" cy="672" r="12.5" fill="#0f0f0f" stroke="#ab47bc" stroke-width="2"/><path d="M995 664l-9 9h5l-2 7 9-9h-5z" fill="#ab47bc"/><circle cx="1000.5" cy="663.5" r="5" fill="#0f0f0f"/><circle cx="1000.5" cy="663.5" r="3.5" fill="#f23645"/>');

// RSI pane
rect(LEFT, 741, RIGHT - LEFT, 24, "#171717");
[[741, "#7a7a7a"], [753.5, "#4d4d4d"], [764.5, "#7a7a7a"]].forEach(([y, c]) => line(LEFT, y, RIGHT, y, c, 1.2, 'stroke-dasharray="5 6"'));
poly("70,755 82,753 94,754 122,748 150,752 180,746 220,749 250,744 284,747 292,751 298,745 312,749 320,756 331,759 340,755 349,750 359,757 366,764 370,762 376,764 388,764 395,767 412,758 417,767 424,760 437,763 449,763 467,754 480,762 492,759 500,762 510,761 513,755 522,758 533,764 543,767 548,760 559,760 567,754 584,753 604,755 620,749 631,747 642,741 649,744 663,745 667,742 671,746 680,752 708,757 712,754 722,762 731,760 742,763 747,760 763,759 780,756 788,757 802,762 810,764 816,757 823,755 831,744 837,741 844,740 861,748 882,747 902,751 924,760 939,755 957,753 973,760 988,753 993,752", "#167a78", 1.3);
poly("70,761 90,757 143,748 204,752 284,751 298,751 314,749 339,752 367,757 408,762 433,763 465,761 498,761 518,759 539,761 571,761 592,758 620,753 641,751 667,746 690,746 720,752 743,758 771,761 823,759 845,754 865,748 886,745 902,747 927,751 951,754 976,756 993,755", "#c9b548", 1.4);

// pane separators
line(LEFT, 688.5, 1859, 688.5, "#2e2e2e", 1.5);
line(LEFT, 727.5, 1859, 727.5, "#2e2e2e", 1.5);

// price labels
[
  [304, 21, "#089981", "2.3391", "#fff"], [394, 21, "#808080", "2.2826", "#fff"], [415, 21, "#673ab7", "2.2796", "#fff"],
  [436, 21, "#f06292", "2.2784", "#fff"], [460, 19, "#fff176", "", "#000"], [479, 21, "#f23645", "2.2654", "#fff"], [500, 21, "#5d5d5d", "2.2435", "#fff"]
].forEach(([y, h, bg, s, c]) => {
  rect(1780, y, 61, h, bg, 'rx="1"');
  if (s) text(1791, y + 16, s, c);
});
rect(1780, 354, 61, 40, "#089981", 'rx="2"');
text(1791, 371, "2.2836", "#fff");
text(1791, 388, "55:06", "#bfe6df");
rect(1780, 449, 61, 26, "#3a3a3a");
text(1791, 468, "2.1812", "#fff");
rect(1752, 449, 27, 26, "#3a3a3a", 'rx="2"');
out.push('<circle cx="1765.5" cy="462.5" r="9.5" fill="none" stroke="#fff"/><path d="M1760 462.5h11M1765.5 457v11" stroke="#fff"/>');

// crosshair time
rect(1194, 775, 164, 30, "#3d3d3d", 'rx="2"');
text(1276, 798, "수 2025-11-12   11:00", "#fff", 'text-anchor="middle" style="white-space:pre"');

out.push('<path d="M1814.5 784.5h9l5 8.5-5 8.5h-9l-5-8.5z" fill="none" stroke="#dbdbdb" stroke-width="1.3"/><circle cx="1819" cy="793" r="2.5" fill="none" stroke="#dbdbdb" stroke-width="1.3"/>');

svg.innerHTML = out.join("");
```
